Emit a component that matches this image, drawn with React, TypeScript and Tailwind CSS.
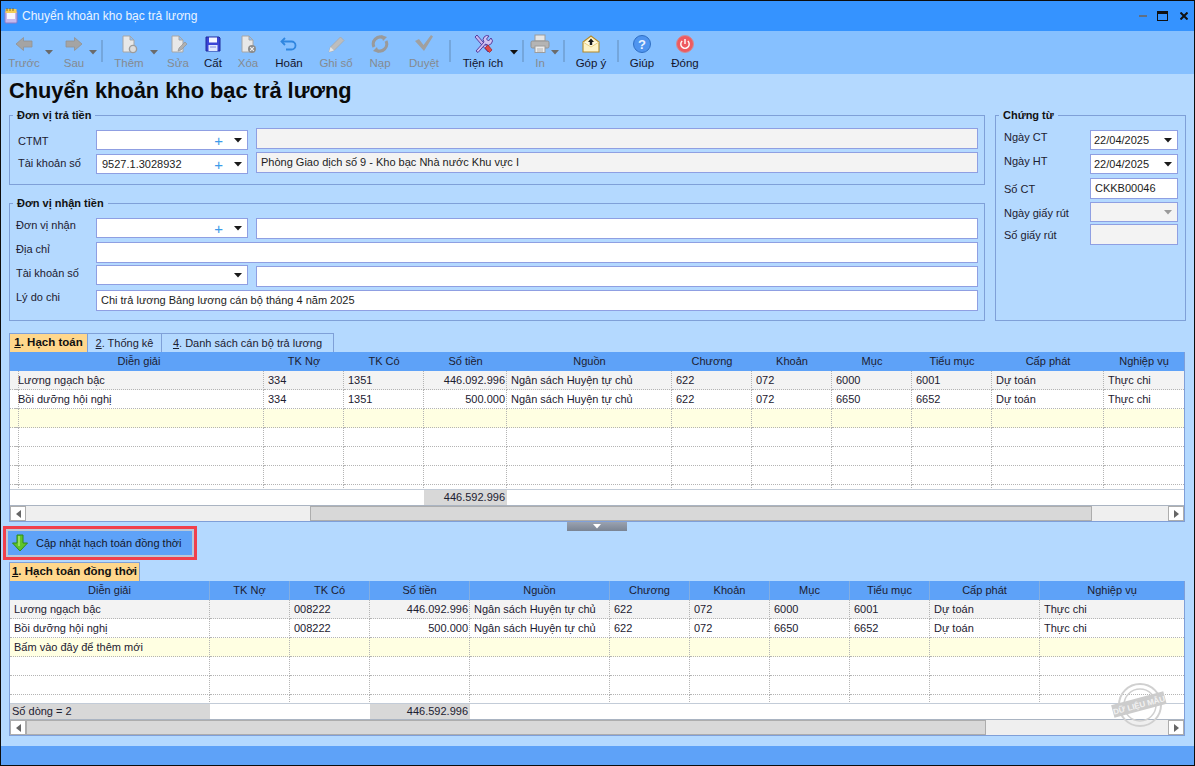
import { ReactNode } from "react";

const FONT = "font-['Liberation_Sans',Arial,sans-serif]";

/* ---------- icons ---------- */
const ArrowLeftIcon = () => (
  <svg width="20" height="20" viewBox="0 0 20 20"><path d="M2 10 L9.5 3.5 V7 H18 V13 H9.5 V16.5 Z" fill="#a4a4a4" stroke="#929292" strokeWidth="0.8" /></svg>
);
const ArrowRightIcon = () => (
  <svg width="20" height="20" viewBox="0 0 20 20"><path d="M18 10 L10.5 3.5 V7 H2 V13 H10.5 V16.5 Z" fill="#a4a4a4" stroke="#929292" strokeWidth="0.8" /></svg>
);
const DocBase = () => (
  <path d="M4 2 H11 L15 6 V18 H4 Z M11 2 V6 H15" fill="#e8e8e8" stroke="#a6a6a6" strokeWidth="1" />
);
const DocPlusIcon = () => (
  <svg width="20" height="20" viewBox="0 0 20 20">
    <DocBase />
    <circle cx="14" cy="15" r="3.6" fill="#dcdcdc" stroke="#9c9c9c" strokeWidth="1.4" />
  </svg>
);
const DocEditIcon = () => (
  <svg width="20" height="20" viewBox="0 0 20 20">
    <DocBase />
    <path d="M10 17 L11 14 L17 8 L19 10 L13 16 Z" fill="#b0b0b0" stroke="#8d8d8d" strokeWidth="0.6" />
  </svg>
);
const DocDeleteIcon = () => (
  <svg width="20" height="20" viewBox="0 0 20 20">
    <DocBase />
    <circle cx="14" cy="15" r="4" fill="#8c8c8c" />
    <path d="M12.2 13.2 L15.8 16.8 M15.8 13.2 L12.2 16.8" stroke="#f0f0f0" strokeWidth="1.2" />
  </svg>
);
const SaveIcon = () => (
  <svg width="20" height="20" viewBox="0 0 20 20">
    <path d="M3 3 H16 L17 4 V17 H3 Z" fill="#3a44d6" stroke="#1e2a9c" strokeWidth="1" />
    <rect x="6" y="3.5" width="8" height="5" fill="#f4f6ff" />
    <rect x="5.5" y="11" width="9" height="6" fill="#dfe6ff" />
    <rect x="7" y="12.5" width="6" height="1" fill="#7f8ce0" />
  </svg>
);
const UndoIcon = () => (
  <svg width="20" height="20" viewBox="0 0 20 20" fill="none">
    <path d="M6 4 L2.5 7.5 L6 11" stroke="#2f86e0" strokeWidth="1.8" />
    <path d="M3 7.5 H12.5 A4 4 0 0 1 12.5 15.5 H7" stroke="#2f86e0" strokeWidth="1.8" />
  </svg>
);
const PencilIcon = () => (
  <svg width="20" height="20" viewBox="0 0 20 20">
    <path d="M3 18 L4.5 13 L14.5 3 L18 6.5 L8 16.5 Z" fill="#bdbdbd" stroke="#a8a8a8" strokeWidth="0.8" />
    <path d="M3 18 L4.5 13 L8 16.5 Z" fill="#e4e4e4" />
  </svg>
);
const ReloadIcon = () => (
  <svg width="20" height="20" viewBox="0 0 20 20" fill="none">
    <path d="M4 13 A7 7 0 0 1 13 3.5" stroke="#9a9a9a" strokeWidth="3" />
    <path d="M16 7 A7 7 0 0 1 7 16.5" stroke="#9a9a9a" strokeWidth="3" />
    <path d="M11 1 L17 3 L13 7 Z" fill="#9a9a9a" />
    <path d="M9 19 L3 17 L7 13 Z" fill="#9a9a9a" />
  </svg>
);
const CheckIcon = () => (
  <svg width="20" height="20" viewBox="0 0 20 20"><path d="M1 7 L5 5 L9.5 11 L17 1 L19 2.5 L10 17 Z" fill="#a0a0a0" /></svg>
);
const ToolsIcon = () => (
  <svg width="20" height="20" viewBox="0 0 20 20">
    <path d="M2 3 L4 1 L10 8 L17 16 L15 18 L8 10 Z" fill="#c9b6ee" stroke="#4c2f96" strokeWidth="0.9" />
    <path d="M3 17 L11 8 A4 4 0 0 1 16 2 L13.5 5 L15.5 7 L18 4 A4 4 0 0 1 12.5 10 L5 18.5 Z" fill="#cfc2f2" stroke="#4c2f96" strokeWidth="0.9" />
    <path d="M12 14 L15 11 L19 16 L16.5 18.5 Z" fill="#e04848" stroke="#9c2424" strokeWidth="0.7" />
  </svg>
);
const PrinterIcon = () => (
  <svg width="20" height="20" viewBox="0 0 20 20">
    <rect x="5" y="1" width="10" height="6" fill="#e6e6e6" stroke="#9c9c9c" />
    <rect x="1" y="7" width="18" height="7" rx="1.5" fill="#b4b4b4" stroke="#929292" />
    <rect x="5" y="12" width="10" height="6.5" fill="#ededed" stroke="#9c9c9c" />
    <path d="M7 15 H13 M7 17 H13" stroke="#b0b0b0" />
  </svg>
);
const MailUpIcon = () => (
  <svg width="20" height="20" viewBox="0 0 20 20">
    <path d="M2 8 L10 2 L18 8 V18 H2 Z" fill="#fdf3c8" stroke="#b58a28" strokeWidth="1.1" />
    <path d="M2 8 L10 13 L18 8" fill="#fff9e0" stroke="#e4c66c" strokeWidth="0.8" />
    <path d="M10 4.5 L13 8 H11.2 V11 H8.8 V8 H7 Z" fill="#1c1c1c" />
  </svg>
);
const HelpIcon = () => (
  <svg width="20" height="20" viewBox="0 0 20 20">
    <circle cx="10" cy="10" r="8.5" fill="#4f94ef" stroke="#2f6fc4" />
    <text x="10" y="14.5" textAnchor="middle" fontSize="13" fontWeight="700" fill="#eaf3ff" fontFamily="Liberation Sans">?</text>
  </svg>
);
const PowerIcon = () => (
  <svg width="20" height="20" viewBox="0 0 20 20" fill="none">
    <circle cx="10" cy="10" r="8.5" fill="#ee5a60" stroke="#cf8c94" />
    <path d="M7.2 7 A4.2 4.2 0 1 0 12.8 7" stroke="#fff" strokeWidth="1.4" />
    <path d="M10 5 V10" stroke="#fff" strokeWidth="1.4" />
  </svg>
);
const Caret = ({ color = "#1a1a1a" }: { color?: string }) => (
  <svg width="8" height="5" viewBox="0 0 8 5"><path d="M0 0 H8 L4 4.5 Z" fill={color} /></svg>
);

/* ---------- toolbar ---------- */
type Tool = { label: string; icon: ReactNode; box: string; disabled?: boolean; dd?: string };

const TOOLS_A: Tool[] = [
  { label: "Trước", icon: <ArrowLeftIcon />, box: "w-[40px]", disabled: true, dd: "-right-[9px]" },
  { label: "Sau", icon: <ArrowRightIcon />, box: "w-[40px] ml-[10px]", disabled: true, dd: "-right-[3px]" },
];
const TOOLS_B: Tool[] = [
  { label: "Thêm", icon: <DocPlusIcon />, box: "w-[40px] ml-[6px]", disabled: true, dd: "-right-[9px]" },
  { label: "Sửa", icon: <DocEditIcon />, box: "w-[40px] ml-[9px]", disabled: true },
  { label: "Cất", icon: <SaveIcon />, box: "w-[30px]" },
  { label: "Xóa", icon: <DocDeleteIcon />, box: "w-[40px]", disabled: true },
  { label: "Hoãn", icon: <UndoIcon />, box: "w-[42px]" },
  { label: "Ghi sổ", icon: <PencilIcon />, box: "w-[52px]", disabled: true },
  { label: "Nạp", icon: <ReloadIcon />, box: "w-[36px]", disabled: true },
  { label: "Duyệt", icon: <CheckIcon />, box: "w-[48px] ml-[2px]", disabled: true },
];

function ToolButton({ tool }: { tool: Tool }) {
  return (
    <div className={`relative flex h-full shrink-0 flex-col items-center pt-[3px] ${tool.box}`}>
      <div className="flex h-[20px] items-center justify-center">{tool.icon}</div>
      <span className={`mt-[2px] whitespace-nowrap text-[11.5px] leading-[14px] ${tool.disabled ? "text-[#858a90]" : "text-[#14142c]"}`}>
        {tool.label}
      </span>
      {tool.dd && (
        <span className={`absolute top-[19px] flex ${tool.dd}`}>
          <Caret color={tool.disabled ? "#6a6a6a" : "#111111"} />
        </span>
      )}
    </div>
  );
}

const ToolSep = ({ className }: { className: string }) => (
  <div className={`mt-[9px] h-[22px] w-[2px] shrink-0 bg-[#74a6dc] ${className}`} />
);

/* ---------- form bits ---------- */
function ComboBox({ value, plus, className = "" }: { value?: string; plus?: boolean; className?: string }) {
  return (
    <div className={`flex h-[20px] w-[152px] shrink-0 items-center border border-[#8f9fe2] bg-white pl-[5px] text-[11px] text-[#1c1c1c] ${className}`}>
      <span className="flex-1">{value}</span>
      {plus && <span className="mr-[11px] text-[15px] leading-none text-[#3d9be9]">+</span>}
      <span className="mr-[5px] flex"><Caret /></span>
    </div>
  );
}

function TextBox({ value, disabled, className = "" }: { value?: string; disabled?: boolean; className?: string }) {
  return (
    <div className={`flex h-[21px] items-center border border-[#8f9fe2] pl-[4px] text-[11px] text-[#1c1c1c] ${disabled ? "bg-[#f3f3f3]" : "bg-white"} ${className}`}>
      {value}
    </div>
  );
}

function Group({ title, className, children }: { title: string; className: string; children: ReactNode }) {
  return (
    <div className={`relative border border-[#7fa0d8] ${className}`}>
      <span className="absolute -top-[8px] left-[3px] bg-[#b4d9ff] px-[4px] text-[11px] font-bold leading-[14px] text-[#111111]">
        {title}
      </span>
      {children}
    </div>
  );
}

const FieldLabel = ({ children, className }: { children: ReactNode; className: string }) => (
  <span className={`shrink-0 whitespace-nowrap text-[11px] leading-[14px] text-[#1c2030] ${className}`}>{children}</span>
);

/* ---------- data grid ---------- */
const COLS_TOP = "grid-cols-[4px_250px_80px_80px_83px_165px_80px_80px_80px_80px_112px_80px]";
const COLS_BOTTOM = "grid-cols-[200px_80px_80px_100px_140px_80px_80px_80px_80px_110px_144px]";

type GridProps = {
  cols: string;
  header: string[];
  rows: string[][];
  moneyCol: number;
  footer: { text?: string; gray?: boolean; right?: boolean }[];
  bodyHeight: string;
  headSep?: boolean;
  thumb: string;
};

function DataGrid({ cols, header, rows, moneyCol, footer, bodyHeight, headSep, thumb }: GridProps) {
  return (
    <div className="border border-t-0 border-[#7f9fd8] bg-white text-[11px] text-[#1c2030]">
      <div className={`grid h-[19px] bg-[#5ea2f8] ${cols}`}>
        {header.map((h, i) => (
          <div key={i} className={`flex items-center justify-center ${headSep && i < header.length - 1 ? "border-r border-[#84aee0]" : ""}`}>
            {h}
          </div>
        ))}
      </div>
      <div className={`overflow-hidden ${bodyHeight}`}>
        {rows.map((row, r) => (
          <div key={r} className={`grid h-[19px] ${cols} ${r === 0 ? "bg-[#f3f3f3]" : r === 2 ? "bg-[#ffffe2]" : "bg-white"}`}>
            {row.map((c, i) => (
              <div
                key={i}
                className={`flex items-center overflow-hidden whitespace-nowrap border-b border-dotted border-[#b4b4b4] px-[4px] ${i < row.length - 1 ? "border-r" : ""} ${i === moneyCol ? "justify-end !pr-[1px]" : ""}`}
              >
                {c}
              </div>
            ))}
          </div>
        ))}
      </div>
      <div className={`grid h-[16px] border-t border-[#c3ccd8] ${cols}`}>
        {footer.map((f, i) => (
          <div key={i} className={`flex items-center overflow-hidden whitespace-nowrap px-[2px] ${f.gray ? "bg-[#d8d8d8]" : ""} ${f.right ? "justify-end" : ""}`}>
            {f.text}
          </div>
        ))}
      </div>
      <div className="flex h-[16px] border-t border-[#aab4c2] bg-[#efefef]">
        <div className="flex w-[16px] items-center justify-center border border-[#adadad] bg-white">
          <svg width="5" height="8" viewBox="0 0 5 8"><path d="M5 0 V8 L0 4 Z" fill="#666666" /></svg>
        </div>
        <div className="relative flex-1">
          <div className={`absolute inset-y-0 border border-[#adadad] bg-[#d8d8d8] ${thumb}`} />
        </div>
        <div className="flex w-[16px] items-center justify-center border border-[#adadad] bg-white">
          <svg width="5" height="8" viewBox="0 0 5 8"><path d="M0 0 V8 L5 4 Z" fill="#666666" /></svg>
        </div>
      </div>
    </div>
  );
}

const ROW_A = ["Lương ngạch bậc", "334", "1351", "446.092.996", "Ngân sách Huyện tự chủ", "622", "072", "6000", "6001", "Dự toán", "Thực chi"];
const ROW_B = ["Bồi dưỡng hội nghị", "334", "1351", "500.000", "Ngân sách Huyện tự chủ", "622", "072", "6650", "6652", "Dự toán", "Thực chi"];
const TOP_BLANK = Array(12).fill("");
const TOP_ROWS = [["", ...ROW_A], ["", ...ROW_B], TOP_BLANK, TOP_BLANK, TOP_BLANK, TOP_BLANK, TOP_BLANK];

const ROW_C = ["Lương ngạch bậc", "", "008222", "446.092.996", "Ngân sách Huyện tự chủ", "622", "072", "6000", "6001", "Dự toán", "Thực chi"];
const ROW_D = ["Bồi dưỡng hội nghị", "", "008222", "500.000", "Ngân sách Huyện tự chủ", "622", "072", "6650", "6652", "Dự toán", "Thực chi"];
const BOTTOM_BLANK = Array(11).fill("");
const BOTTOM_ROWS = [ROW_C, ROW_D, ["Bấm vào đây để thêm mới", ...Array(10).fill("")], BOTTOM_BLANK, BOTTOM_BLANK, BOTTOM_BLANK];

const HEAD_COMMON = ["Nguồn", "Chương", "Khoản", "Mục", "Tiểu mục", "Cấp phát", "Nghiệp vụ"];

function Stamp() {
  return (
    <svg width="56" height="48" viewBox="0 0 56 48" className="pointer-events-none absolute right-[18px] top-[100px]">
      <g fill="none" stroke="#d0d0d0">
        <circle cx="29" cy="24" r="21" strokeWidth="2" />
        <circle cx="29" cy="24" r="16" strokeWidth="1.5" />
      </g>
      <g transform="rotate(-15 28 24)">
        <rect x="1" y="17" width="54" height="13" fill="#cccccc" />
        <text x="28" y="27" textAnchor="middle" fontSize="8" fontWeight="700" fill="#f2f2f2" fontFamily="Liberation Sans">DỮ LIỆU MẪU</text>
      </g>
    </svg>
  );
}

export default function App() {
  return (
    <div className={`flex h-[766px] w-[1195px] flex-col overflow-hidden border border-[#0c0c0c] bg-[#b4d9ff] ${FONT}`}>
      {/* title bar */}
      <div className="flex h-[30px] shrink-0 items-center bg-[#3593ff] pl-[3px] pr-[6px]">
        <svg width="14" height="16" viewBox="0 0 14 16">
          <rect x="1" y="3" width="12" height="12" rx="1" fill="#c5b8ee" stroke="#8d7cc8" />
          <rect x="3" y="5" width="8" height="6" fill="#f7f4ff" />
          <rect x="1.5" y="1" width="11" height="4" fill="#f3cf5a" />
          <path d="M3 0 V3 M6 0 V3 M9 0 V3" stroke="#8a6a20" />
        </svg>
        <span className="ml-[4px] flex-1 text-[12px] text-[#eaf4ff]">Chuyển khoản kho bạc trả lương</span>
        <div className="h-[2px] w-[8px] bg-[#5f6f84]" />
        <div className="ml-[10px] h-[10px] w-[11px] border border-t-[3px] border-[#111111]" />
        <svg width="8" height="8" viewBox="0 0 8 8" className="ml-[12px]">
          <path d="M0.5 0.5 L7.5 7.5 M7.5 0.5 L0.5 7.5" stroke="#111111" strokeWidth="2" />
        </svg>
      </div>

      {/* toolbar */}
      <div className="flex h-[43px] shrink-0 bg-[#86c0ff] pl-[3px]">
        {TOOLS_A.map((t) => <ToolButton key={t.label} tool={t} />)}
        <ToolSep className="ml-[7px]" />
        {TOOLS_B.map((t) => <ToolButton key={t.label} tool={t} />)}
        <ToolSep className="ml-[1px]" />
        <ToolButton tool={{ label: "Tiện ích", icon: <ToolsIcon />, box: "w-[50px] ml-[7px]", dd: "-right-[10px]" }} />
        <ToolSep className="ml-[14px]" />
        <ToolButton tool={{ label: "In", icon: <PrinterIcon />, box: "w-[24px] ml-[4px]", disabled: true, dd: "-right-[7px]" }} />
        <ToolSep className="ml-[11px]" />
        <ToolButton tool={{ label: "Góp ý", icon: <MailUpIcon />, box: "w-[44px] ml-[4px]" }} />
        <ToolSep className="ml-[4px]" />
        <ToolButton tool={{ label: "Giúp", icon: <HelpIcon />, box: "w-[40px] ml-[3px]" }} />
        <ToolButton tool={{ label: "Đóng", icon: <PowerIcon />, box: "w-[46px]" }} />
      </div>

      {/* body */}
      <div className="relative flex flex-1 flex-col">
        <h1 className="ml-[8px] h-[41px] shrink-0 pt-[3px] text-[21.8px] font-bold leading-[28px] text-[#0a0a0a]">
          Chuyển khoản kho bạc trả lương
        </h1>

        <div className="ml-[8px] flex h-[206px] shrink-0 gap-[10px]">
          <div className="flex w-[976px] flex-col gap-[18px]">
            <Group title="Đơn vị trả tiền" className="h-[70px] pl-[8px] pr-[6px] pt-[12px]">
              <div className="flex h-[21px]">
                <FieldLabel className="mt-[6px] w-[78px]">CTMT</FieldLabel>
                <ComboBox plus className="mt-[2px]" />
                <TextBox disabled className="ml-[8px] flex-1" />
              </div>
              <div className="mt-[3px] flex h-[21px]">
                <FieldLabel className="mt-[4px] w-[78px]">Tài khoản số</FieldLabel>
                <ComboBox plus value="9527.1.3028932" className="mt-[2px]" />
                <TextBox disabled value="Phòng Giao dịch số 9 - Kho bạc Nhà nước Khu vực I" className="ml-[8px] flex-1" />
              </div>
            </Group>
            <Group title="Đơn vị nhận tiền" className="h-[118px] pl-[6px] pr-[6px] pt-[14px]">
              <div className="flex h-[21px]">
                <FieldLabel className="w-[80px]">Đơn vị nhận</FieldLabel>
                <ComboBox plus />
                <TextBox className="ml-[8px] flex-1" />
              </div>
              <div className="mt-[3px] flex h-[21px]">
                <FieldLabel className="w-[80px]">Địa chỉ</FieldLabel>
                <TextBox className="flex-1" />
              </div>
              <div className="mt-[3px] flex h-[21px]">
                <FieldLabel className="w-[80px]">Tài khoản số</FieldLabel>
                <ComboBox className="-mt-[1px]" />
                <TextBox className="ml-[8px] flex-1" />
              </div>
              <div className="mt-[3px] flex h-[21px]">
                <FieldLabel className="w-[80px]">Lý do chi</FieldLabel>
                <TextBox value="Chi trả lương Bảng lương cán bộ tháng 4 năm 2025" className="flex-1" />
              </div>
            </Group>
          </div>

          <Group title="Chứng từ" className="h-[206px] w-[191px] pl-[8px] pr-[7px] pt-[14px]">
            <div className="flex h-[20px]">
              <FieldLabel className="w-[86px]">Ngày CT</FieldLabel>
              <ComboBox value="22/04/2025" className="!w-[88px] !pl-[3px]" />
            </div>
            <div className="mt-[4px] flex h-[20px]">
              <FieldLabel className="w-[86px]">Ngày HT</FieldLabel>
              <ComboBox value="22/04/2025" className="!w-[88px] !pl-[3px]" />
            </div>
            <div className="mt-[4px] flex h-[21px]">
              <FieldLabel className="mt-[4px] w-[86px]">Số CT</FieldLabel>
              <TextBox value="CKKB00046" className="w-[88px]" />
            </div>
            <div className="mt-[3px] flex h-[20px]">
              <FieldLabel className="mt-[4px] w-[86px]">Ngày giấy rút</FieldLabel>
              <div className="flex w-[88px] items-center justify-end border border-[#8f9fe2] bg-[#f3f3f3] pr-[5px]">
                <Caret color="#9a9a9a" />
              </div>
            </div>
            <div className="mt-[2px] flex h-[21px]">
              <FieldLabel className="mt-[4px] w-[86px]">Số giấy rút</FieldLabel>
              <TextBox disabled className="w-[88px]" />
            </div>
          </Group>
        </div>

        {/* tabs */}
        <div className="ml-[8px] mt-[12px] flex h-[19px] w-[325px] shrink-0 text-[11px] text-[#1c2030]">
          <div className="flex w-[79px] items-center justify-center whitespace-nowrap border border-b-0 border-[#7fa0d8] bg-[#ffd78c] text-[11.5px] font-bold text-[#111111]">
            <span><u>1</u>. Hạch toán</span>
          </div>
          <div className="flex w-[74px] items-center justify-center whitespace-nowrap border-t border-r border-[#7fa0d8]">
            <span><u>2</u>. Thống kê</span>
          </div>
          <div className="flex flex-1 items-center justify-center whitespace-nowrap border-t border-r border-[#7fa0d8]">
            <span><u>4</u>. Danh sách cán bộ trả lương</span>
          </div>
        </div>

        <div className="ml-[8px] w-[1176px] shrink-0">
          <DataGrid
            cols={COLS_TOP}
            header={["", "Diễn giải", "TK Nợ", "TK Có", "Số tiền", ...HEAD_COMMON]}
            rows={TOP_ROWS}
            moneyCol={4}
            bodyHeight="h-[118px]"
            thumb="left-[284px] w-[782px]"
            footer={[{}, {}, {}, {}, { text: "446.592.996", gray: true, right: true }, {}, {}, {}, {}, {}, {}, {}]}
          />
        </div>

        {/* splitter handle */}
        <div className="absolute left-[566px] top-[448px] flex h-[9px] w-[60px] items-start justify-center bg-gradient-to-b from-[#9aa2b0] to-[#7a8494] pt-[2px]">
          <Caret color="#ffffff" />
        </div>

        {/* update button */}
        <div className="ml-[2px] mt-[4px] w-[194px] shrink-0 border-[3px] border-[#f0404c] bg-[#b9c8da] p-[2px]">
          <div className="flex h-[24px] items-center whitespace-nowrap bg-[#5ea2f8] pl-[3px] text-[11px] text-[#14182c]">
            <svg width="18" height="18" viewBox="0 0 18 18">
              <path d="M6 1 H12 V9 H16.5 L9 17 L1.5 9 H6 Z" fill="#5fc42c" stroke="#2f8a18" strokeWidth="1" />
              <path d="M8 2 V12" stroke="#a8ea70" strokeWidth="1.5" />
            </svg>
            <span className="ml-[7px]">Cập nhật hạch toán đồng thời</span>
          </div>
        </div>

        {/* second grid */}
        <div className="ml-[8px] mt-[2px] flex h-[19px] w-[131px] shrink-0 items-center justify-center whitespace-nowrap border border-b-0 border-[#7fa0d8] bg-[#ffd78c] text-[11.5px] font-bold text-[#111111]">
          <span><u>1</u>. Hạch toán đồng thời</span>
        </div>
        <div className="relative ml-[8px] w-[1176px] shrink-0">
          <DataGrid
            cols={COLS_BOTTOM}
            header={["Diễn giải", "TK Nợ", "TK Có", "Số tiền", ...HEAD_COMMON]}
            rows={BOTTOM_ROWS}
            moneyCol={3}
            headSep
            bodyHeight="h-[103px]"
            thumb="left-0 w-[960px]"
            footer={[
              { text: "Số dòng = 2", gray: true }, {}, {},
              { text: "446.592.996", gray: true, right: true },
              {}, {}, {}, {}, {}, {}, {},
            ]}
          />
          <Stamp />
        </div>
      </div>

      {/* status bar */}
      <div className="h-[19px] shrink-0 bg-[#5ea2f8]" />
    </div>
  );
}
